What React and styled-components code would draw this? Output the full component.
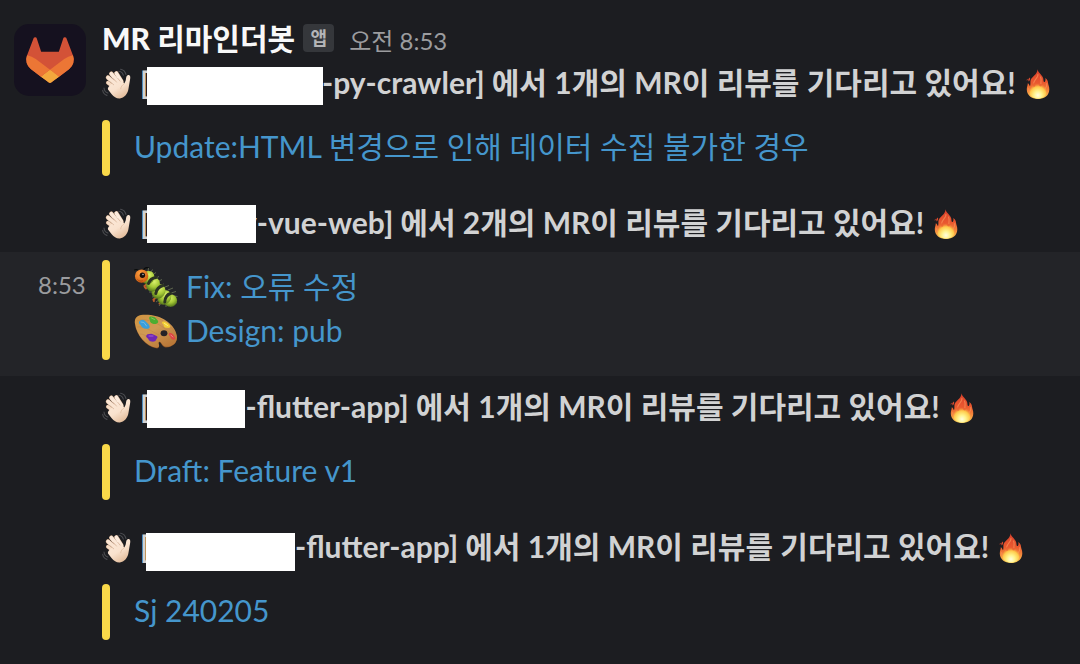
import React from 'react';
import styled, { createGlobalStyle } from 'styled-components';

const GlobalStyle = createGlobalStyle`
  * { box-sizing: border-box; }
  body { margin: 0; background: #1c1d21; }
`;

const Page = styled.main`
  width: 1080px;
  height: 664px;
  overflow: hidden;
  background: #1c1d21;
  color: #d1d2d3;
  font-family: Lato, 'Noto Sans CJK KR', sans-serif;
  font-size: 30px;
  line-height: 40px;
  white-space: nowrap;
`;

const Message = styled.section`
  display: grid;
  grid-template-columns: 102px 1fr;
  padding-top: ${(p) => p.$top || 0}px;
`;

const Gutter = styled.div`
  padding: ${(p) => (p.$avatar ? '6px 0 0 14px' : '0')};
`;

const Avatar = styled.div`
  width: 72px;
  height: 72px;
  border-radius: 15px;
  overflow: hidden;
  background: #15111f;
  svg { display: block; }
`;

const Sender = styled.header`
  display: flex;
  align-items: center;
  height: 44px;
`;

const Name = styled.span`
  color: #f8f8f8;
  font-weight: 900;
  margin: 0 8px 4px 0;
`;

const NameKo = styled.span`
  font-weight: 700;
`;

const AppBadge = styled.span`
  width: 31px;
  height: 28px;
  border-radius: 4px;
  background: #35373b;
  color: #b4b5b7;
  font-size: 18px;
  font-weight: 700;
  line-height: 28px;
  text-align: center;
  margin: -5px 15px 0 0;
`;

const Time = styled.time`
  color: #9b9c9f;
  font-size: 24px;
  line-height: 44px;
  padding-top: 1px;
`;

const Heading = styled.h2`
  display: flex;
  align-items: center;
  height: 44px;
  margin: 0;
  font-size: 30px;
  font-weight: 700;
  svg { flex: none; }
`;

const Bracket = styled.span`
  width: 7px;
  margin: 0 0 4px 8px;
`;

const Redaction = styled.span`
  flex: none;
  position: relative;
  z-index: 1;
  width: ${(p) => p.$w}px;
  height: 38px;
  top: ${(p) => p.$shift || 0}px;
  margin-left: ${(p) => p.$ml || 0}px;
  background: #fff;
`;

const Repo = styled.span`
  margin: 0 0 4px ${(p) => p.$ml || 0}px;
`;

const Sentence = styled.span`
  margin: 0 10px 4px 7px;
`;

const Attachment = styled.div`
  display: flex;
  gap: 24px;
  margin-top: ${(p) => (p.$flush ? 0 : 14)}px;
`;

const Bar = styled.i`
  width: 8px;
  border-radius: 4px;
  background: #f9d849;
`;

const Links = styled.div`
  display: flex;
  flex-direction: column;
  padding: 6px 0;
`;

const Link = styled.a`
  display: flex;
  align-items: center;
  gap: 8px;
  height: 44px;
  color: #4596cc;
`;

const LinkText = styled.span`
  padding-bottom: 4px;
`;

const HoverRow = styled.section`
  display: grid;
  grid-template-columns: 102px 1fr;
  height: 124px;
  margin-top: 6px;
  padding: 8px 0 16px;
  background: #232428;
`;

const HoverTime = styled(Time)`
  padding: 3px 0 0 38px;
`;

const Tanuki = () => (
  <svg width="72" height="72" viewBox="44.5 44 291 291">
    <path fill="#d35237" d="M282.83,170.73l-.27-.69-26.14-68.22a6.81,6.81,0,0,0-2.69-3.24,7,7,0,0,0-8,.43,7,7,0,0,0-2.32,3.52l-17.65,54H154.29l-17.65-54A6.86,6.86,0,0,0,134.32,99a7,7,0,0,0-8-.43,6.87,6.87,0,0,0-2.69,3.24L97.44,170l-.26.69a48.54,48.54,0,0,0,16.1,56.1l.09.07.24.17,39.82,29.82,19.7,14.91,12,9.06a8.07,8.07,0,0,0,9.76,0l12-9.06,19.7-14.91,40.06-30,.1-.08A48.56,48.56,0,0,0,282.83,170.73Z" />
    <path fill="#ec7635" d="M282.83,170.73l-.27-.69a88.3,88.3,0,0,0-35.15,15.8L190,229.25c19.55,14.79,36.57,27.64,36.57,27.64l40.06-30,.1-.08A48.56,48.56,0,0,0,282.83,170.73Z" />
    <path fill="#f3a83d" d="M153.43,256.89l19.7,14.91,12,9.06a8.07,8.07,0,0,0,9.76,0l12-9.06,19.7-14.91S209.55,244,190,229.25C170.45,244,153.43,256.89,153.43,256.89Z" />
    <path fill="#ec7635" d="M132.58,185.84A88.19,88.19,0,0,0,97.44,170l-.26.69a48.54,48.54,0,0,0,16.1,56.1l.09.07.24.17,39.82,29.82s17-12.85,36.57-27.64Z" />
  </svg>
);

const Wave = () => (
  <svg width="30" height="32" viewBox="0 0 30 32">
    <defs>
      <linearGradient id="skin" x1="0" y1="0" x2=".6" y2="1">
        <stop offset="0" stopColor="#fcebdc" />
        <stop offset=".6" stopColor="#f9e2ce" />
        <stop offset="1" stopColor="#e3bd9c" />
      </linearGradient>
    </defs>
    <g fill="none" stroke="#4b4c50" strokeWidth="1.100" strokeLinecap="round">
      <path d="M16.800 3.200c2.200.2 3.900 1.700 4.500 3.900M18.600 1.200c2.700.5 4.700 2.600 5.300 5.200M2 20c.2 2.400 1.600 4.300 3.900 5.100M.7 22.300c.3 2.400 1.900 4.400 4.300 5.100" />
    </g>
    <g strokeLinecap="round" fill="none">
      <g stroke="#b28e72">
        <path d="M13 20 5.900 14.700" strokeWidth="3.900" />
        <path d="M15 17.500 6 9.500" strokeWidth="4.500" />
        <path d="M17 15 9.300 5.700" strokeWidth="4.500" />
        <path d="M19.500 13.500 14.300 5.200" strokeWidth="4.300" />
      </g>
      <path d="M13 20 5.900 14.700" stroke="#f6dcc5" strokeWidth="3.200" />
      <path d="M15 17.500 6 9.500" stroke="#fae5d3" strokeWidth="3.700" />
      <path d="M17 15 9.300 5.700" stroke="#fbe8d8" strokeWidth="3.700" />
      <path d="M19.500 13.500 14.300 5.200" stroke="#fcebdc" strokeWidth="3.600" />
    </g>
    <path fill="url(#skin)" d="M9 16.500 13 12l6.500-.5 2.700 3.900c1.500-1.700 1.600-3.600 2-5.900.3-2 1.500-2.900 2.800-2.500 1.600.5 1.400 2.600 1.100 4.300l-1.700 10c-.7 4.500-4.300 8.800-8.500 9.100-3.500.2-6-1.600-8.200-4.200L6 21.500c-.6-1.500 1-3.500 3-5z" />
    <path fill="none" stroke="#cba387" strokeWidth=".6" strokeLinecap="round" d="m8.500 14 3.200 2.800M11.500 10.600l3 3.500M16 10.500l2 2.600" />
    <path fill="none" stroke="#dcb798" strokeWidth=".7" d="M22.400 15.600c-2.200 1.400-3.500 3-3.700 5.600" />
  </svg>
);

const Fire = () => (
  <svg width="24" height="32" viewBox="0 0 24 32">
    <defs>
      <linearGradient id="flame" x1="0" y1="0" x2="0" y2="1">
        <stop offset="0" stopColor="#d9402c" />
        <stop offset=".45" stopColor="#e9582f" />
        <stop offset=".75" stopColor="#f58e3d" />
        <stop offset="1" stopColor="#ffd75b" />
      </linearGradient>
      <radialGradient id="flameCore" cx=".5" cy=".82" r=".65">
        <stop offset="0" stopColor="#fffde0" />
        <stop offset=".35" stopColor="#fff38c" />
        <stop offset=".72" stopColor="#ffca4b" />
        <stop offset="1" stopColor="#f58b3b" stopOpacity="0" />
      </radialGradient>
    </defs>
    <path fill="url(#flame)" d="M11.600 1.200c.2 1.600 1 2.800 2.400 4.400 2 2.300 3.500 4.200 3.500 6.900 0 .9.300 1.500.8 1.500 1 0 1.500-1.700 1-4 2.300 1.600 2.600 3.200 2.800 5.300.2 1.800 1.300 3.400 1.200 6.200C23.100 27.500 18.500 31 12.100 31 5.600 31 1 27.300.8 21.800c-.1-2.600.9-4.100 1-6.600 1.300.7 1.700 2 2.100 3 .6-.8.5-2.500.5-4.400 0-2.600 1.600-4 3.600-6 2-2 3.300-3.600 3.600-6.600z" />
    <path fill="#dd4b2f" d="M3.800 9.600c.8 1.500.2 2.800-1 3.800-1-1.200-.5-2.700 1-3.800zM1.500 10.800c.3.900 0 1.500-.6 2-.4-.8-.1-1.500.6-2z" />
    <path fill="none" stroke="#f8935a" strokeWidth="1.100" strokeLinecap="round" opacity=".7" d="M11.900 6.500c.8 2.500-3.800 5.500-4.200 8.500M14.500 9c1.200 2.500.3 4.500.4 6.500M20.800 15.500c.6 2.500-.6 4-1.800 5.500M2.700 20.500c0 2 .6 3 1.600 4" />
    <path fill="url(#flameCore)" d="M11.500 12.500c1.500 2.500.8 4.400 2.300 5.500 1.400.9 2.300-.8 2.500-2.500 2.500 2.500 4.500 5.500 4.200 9-.3 3.600-3.900 6-8.400 6s-8.500-2.400-8.700-6.300c-.2-3.100 2-4.800 3.200-7.500.5 1.300.7 2.100 1.500 2.100 1.800 0 .9-4 3.400-6.300z" />
  </svg>
);

const Caterpillar = () => (
  <svg width="44" height="44" viewBox="0 0 44 44">
    <defs>
      <radialGradient id="segment" cx=".45" cy=".3" r=".7">
        <stop offset="0" stopColor="#daf06a" />
        <stop offset=".55" stopColor="#a3c735" />
        <stop offset="1" stopColor="#54751b" />
      </radialGradient>
      <radialGradient id="face" cx=".4" cy=".3" r=".7">
        <stop offset="0" stopColor="#ffa040" />
        <stop offset="1" stopColor="#cc5c12" />
      </radialGradient>
    </defs>
    <g fill="none" stroke="#090b0b" strokeWidth="1.100" strokeLinecap="round">
      <path d="M6 6C4.500 3.500 2 3 .5 4M9 5.200c1-3 3.500-4 6-3.200" />
    </g>
    <path fill="none" stroke="#77835f" strokeWidth=".7" d="m14 6 .5-4m2 5 2-3.500m0 5.500 3.500-2.500m-1 6 4-2m-1 5 4-2m-2 6 4-1.500M31 21l4-1.500M34 24l5-2m-2 5 5-1.500M40 30l3.500.5M39 35l4 2m-8-1 2 5m-5-4 0 4m-4-5-3 4m1-7-4 3m1-6-5 1m2-5-5 0" />
    <g fill="none" stroke="#bd5c2a" strokeWidth="2" strokeLinecap="round">
      <path d="m13 18-2.500 2 .5 1.500M13 21l-1 1.500M22 31.500l-2.500 2 .4 1.500M28 36l-2.500 1.500" />
    </g>
    <ellipse cx="36.500" cy="34.500" rx="6.600" ry="6.300" fill="url(#segment)" />
    <ellipse cx="30.500" cy="31.500" rx="6.400" ry="7.600" fill="url(#segment)" transform="rotate(35 30.500 31.500)" />
    <ellipse cx="24.500" cy="25.500" rx="6.600" ry="7.600" fill="url(#segment)" transform="rotate(38 24.500 25.500)" />
    <ellipse cx="19" cy="18.500" rx="6.600" ry="7.400" fill="url(#segment)" transform="rotate(40 19 18.500)" />
    <ellipse cx="14" cy="11.500" rx="6.200" ry="6.800" fill="url(#segment)" transform="rotate(40 14 11.500)" />
    <g fill="none" stroke="#2b3223" strokeWidth="3" strokeLinecap="round">
      <path d="M22 11.500c-3.500.3-6.300 2.500-7.500 6M29 19.500c-3.800 1-6.500 4-7.200 8M36.500 27.500c-3.300 1-5.500 4.500-5.700 8.500" />
    </g>
    <circle cx="7.600" cy="10.100" r="6.700" fill="url(#face)" />
    <circle cx="8.400" cy="9.200" r="2.700" fill="#170e0c" />
    <circle cx="9" cy="8.500" r=".65" fill="#d9e9e8" />
    <path d="M3.500 13.500c1.300 1.600 3.400 2 5.200 1.100" fill="none" stroke="#9f4815" strokeWidth=".8" />
  </svg>
);

const Palette = () => (
  <svg width="44" height="44" viewBox="0 0 44 44">
    <defs>
      <linearGradient id="wood" x1="0" y1="0" x2=".7" y2="1">
        <stop offset="0" stopColor="#cf9440" />
        <stop offset=".5" stopColor="#d09a55" />
        <stop offset="1" stopColor="#b97838" />
      </linearGradient>
    </defs>
    <path fill="#7f4b22" transform="translate(-.1 .6)" d="M1 13.500C-.3 5.200 7 3.800 17 5.100c12 1.600 24 9.800 25.800 20.500 1.200 6.800-4.200 11.400-11 11.200-2.600-.1-3.500-2.100-4.900-4.200-1.300-1.900-2.800-.5-2.200 1.100 1 2.500.2 4.500-2.500 4C12.400 36 2.600 25.500 1 13.500z" />
    <path fill="url(#wood)" d="M1 13.500C-.3 5.200 7 3.800 17 5.100c12 1.600 24 9.800 25.800 20.500 1.200 6.800-4.200 11.400-11 11.200-2.600-.1-3.500-2.100-4.900-4.200-1.300-1.900-2.800-.5-2.200 1.100 1 2.500.2 4.500-2.500 4C12.400 36 2.600 25.500 1 13.500z" />
    <path fill="none" stroke="#ba8040" strokeWidth=".6" opacity=".7" d="M3 11c9-4 23 2 34 13M3 17c8-1 14 4 22 8M6 24c6 0 9 5 13 10M20 7c7 2 14 6 20 14" />
    <ellipse cx="30" cy="23.200" rx="3.400" ry="3" fill="#252126" />
    <path fill="#3a9edb" d="M6.200 10.500c3-1.800 5 .5 7.200 2.700 2.700 2 3.200 5.200.4 5.500-3.500.7-6.200-1-7.200-3.700-2.200-1.300-2.400-3.100-.4-4.500z" />
    <path fill="#4cad31" d="M16 6.600c2.900-.3 4.600.2 6.500 2.500 2.200 1.700 2.600 4.300-.7 4.900-3.500.4-6.300-1.400-5.700-3.700-1.200-1.500-1.400-2.700-.1-3.700z" />
    <path fill="#f3cf35" d="M28.700 11.700c3-.6 6.900 2.500 7.700 5.100-.9 1.600-2.300 1.100-4.500 1-2.300-.3-2-2.400-2.600-3.500-1.600-1-1.700-1.900-.6-2.600z" />
    <path fill="#df4545" d="M35.500 23c2.100-.5 4.200 1.300 4.700 3.200 1.500 1.100 1.600 2.900.1 3.500-2.200.2-3.900-1.300-4.300-3.400-1.300-.9-1.700-2.300-.5-3.300z" />
    <path fill="#7026b3" d="M13.500 24.300c2.500-.3 3.800-1.400 5.900.3l3.700 1.700c1.200 1.400-.7 2.300-1 3.500-.6 2.200-3.500 1.900-5 1.700-2.300-.3-2.500-2.300-3.400-3.200-2.100-1-2-2.900-.2-4z" />
    <g fill="none" strokeWidth="1" strokeLinecap="round">
      <path stroke="#6fb9e6" d="m7 12 3 .5 2.500 3.500" />
      <path stroke="#85c858" d="m17.500 8 3 1.500" />
      <path stroke="#fff080" d="m30.500 13.500 3 2" />
      <path stroke="#ee8983" d="m36.800 25 2 2" />
      <path stroke="#a25bd4" d="m15 26 4 0" />
    </g>
  </svg>
);

function ReviewHeading({ boxWidth, boxLeft, shift, repo, repoLeft, count }) {
  return (
    <Heading>
      <Wave />
      <Bracket>[</Bracket>
      <Redaction $w={boxWidth} $ml={boxLeft} $shift={shift} />
      <Repo $ml={repoLeft}>{repo}]</Repo>
      <Sentence>에서 {count}개의 MR이 리뷰를 기다리고 있어요!</Sentence>
      <Fire />
    </Heading>
  );
}

function LinkBlock({ flush, children }) {
  return (
    <Attachment $flush={flush}>
      <Bar />
      <Links>{children}</Links>
    </Attachment>
  );
}

export default function App() {
  return (
    <Page>
      <GlobalStyle />
      <Message $top={18}>
        <Gutter $avatar>
          <Avatar><Tanuki /></Avatar>
        </Gutter>
        <div>
          <Sender>
            <Name>MR <NameKo>리마인더봇</NameKo></Name>
            <AppBadge>앱</AppBadge>
            <Time>오전 8:53</Time>
          </Sender>
          <ReviewHeading boxWidth={176} shift={2} repo="-py-crawler" repoLeft={-1} count={1} />
          <LinkBlock>
            <Link><LinkText>Update:HTML 변경으로 인해 데이터 수집 불가한 경우</LinkText></Link>
          </LinkBlock>
        </div>
      </Message>
      <Message $top={26}>
        <Gutter />
        <ReviewHeading boxWidth={109} repo="y-vue-web" repoLeft={-15} count={2} />
      </Message>
      <HoverRow>
        <HoverTime>8:53</HoverTime>
        <LinkBlock flush>
          <Link><Caterpillar /><LinkText>Fix: 오류 수정</LinkText></Link>
          <Link><Palette /><LinkText>Design: pub</LinkText></Link>
        </LinkBlock>
      </HoverRow>
      <Message $top={10}>
        <Gutter />
        <div>
          <ReviewHeading boxWidth={98} shift={1} repo="-flutter-app" repoLeft={0.5} count={1} />
          <LinkBlock>
            <Link><LinkText>Draft: Feature v1</LinkText></Link>
          </LinkBlock>
        </div>
      </Message>
      <Message $top={26}>
        <Gutter />
        <div>
          <ReviewHeading boxWidth={149} boxLeft={-1} shift={4} repo="-flutter-app" count={1} />
          <LinkBlock>
            <Link><LinkText>Sj 240205</LinkText></Link>
          </LinkBlock>
        </div>
      </Message>
    </Page>
  );
}
